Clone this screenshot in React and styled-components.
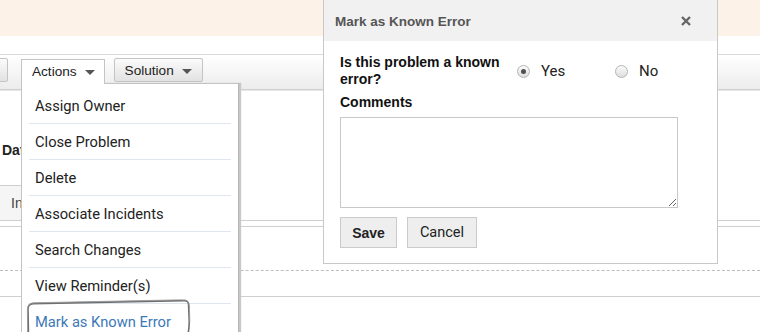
import React from "react";
import styled, { createGlobalStyle } from "styled-components";

const menuItems = [
  "Assign Owner",
  "Close Problem",
  "Delete",
  "Associate Incidents",
  "Search Changes",
  "View Reminder(s)",
  "Mark as Known Error",
];

const App = () => {
  return (
    <Page>
      <GlobalStyle />
      <Banner />
      <Toolbar>
        <ToolButton $stub />
        <ActionsWrap>
          <ActionsTab>
            Actions <Caret />
          </ActionsTab>
          <Menu>
            {menuItems.map((item, i) => (
              <MenuItem key={item} $link={i === menuItems.length - 1}>
                {item}
              </MenuItem>
            ))}
          </Menu>
        </ActionsWrap>
        <ToolButton>
          Solution <Caret />
        </ToolButton>
      </Toolbar>

      <FieldRow>
        <FieldLabel>Date Identified</FieldLabel>
      </FieldRow>
      <TabStrip>
        <Tab>Incidents</Tab>
      </TabStrip>
      <Panel>
        <PanelRow $dashed />
        <PanelRow $short />
      </Panel>

      <Scribble viewBox="0 0 170 40" width="170" height="40">
        <path
          d="M4.5 40 L4 13 Q4 8 9 7.6 L160 4.6 Q164.5 4.4 164.6 9 L165.2 24 Q165.4 33 163.5 40"
          fill="none"
          stroke="#6f6f6f"
          strokeWidth="1.6"
          strokeLinecap="round"
        />
        <path
          d="M3.6 38 L3.4 14 Q3.6 7 10 6.8 L158 3.8 Q165 3.6 165.4 10 L165.8 26"
          fill="none"
          stroke="#9a9a9a"
          strokeWidth="0.9"
          strokeLinecap="round"
        />
      </Scribble>

      <Dialog>
        <DialogHeader>
          <DialogTitle>Mark as Known Error</DialogTitle>
          <CloseIcon viewBox="0 0 10 10" width="10" height="10">
            <path d="M1 1 L9 9 M9 1 L1 9" stroke="#666" strokeWidth="2.4" />
          </CloseIcon>
        </DialogHeader>
        <DialogBody>
          <QuestionRow>
            <Question>Is this problem a known error?</Question>
            <RadioOption>
              <Radio $checked />
              Yes
            </RadioOption>
            <RadioOption>
              <Radio />
              No
            </RadioOption>
          </QuestionRow>
          <FieldTitle>Comments</FieldTitle>
          <Comments />
          <Buttons>
            <DialogButton $primary>Save</DialogButton>
            <DialogButton>Cancel</DialogButton>
          </Buttons>
        </DialogBody>
      </Dialog>
    </Page>
  );
};

export default App;

const GlobalStyle = createGlobalStyle`
  html, body {
    margin: 0;
    padding: 0;
    background: #fff;
    overflow: hidden;
  }
  body {
    font-family: "Liberation Sans", Arial, sans-serif;
    color: #222;
  }
`;

const Page = styled.div`
  position: relative;
  width: 760px;
  height: 332px;
  overflow: hidden;
  background: #fff;
`;

const Banner = styled.div`
  height: 36px;
  background: #fdf2e7;
`;

const Toolbar = styled.div`
  position: relative;
  z-index: 2;
  box-sizing: border-box;
  display: flex;
  align-items: flex-start;
  gap: 9px;
  height: 36px;
  margin-top: 18px;
  padding-top: 3px;
  border-top: 1px solid #dadada;
  border-bottom: 1px solid #cfcfcf;
  box-shadow: 0 1px 0 #e8e8e8;
  background: linear-gradient(#ffffff, #ececec);
`;

const ToolButton = styled.div`
  box-sizing: border-box;
  display: flex;
  align-items: center;
  height: 24px;
  padding: 0 10px 0 10px;
  border: 1px solid #c4c4c4;
  border-radius: 2px;
  background: linear-gradient(#fbfbfb, #e2e2e2);
  font-size: 13.6px;
  color: #222;
  white-space: nowrap;
  ${(p) =>
    p.$stub &&
    `
    width: 70px;
    margin-left: -62px;
    margin-right: 4px;
  `}
`;

const Caret = styled.span`
  width: 0;
  height: 0;
  margin-left: 8px;
  margin-top: 2px;
  border-left: 5px solid transparent;
  border-right: 5px solid transparent;
  border-top: 5px solid #555;
`;

const ActionsWrap = styled.div`
  position: relative;
  margin-top: 1px;
`;

const ActionsTab = styled.div`
  position: relative;
  z-index: 4;
  box-sizing: border-box;
  display: flex;
  align-items: center;
  height: 25px;
  padding: 0 9px 1px 10px;
  border: 1px solid #c4c4c4;
  border-bottom: none;
  background: #fff;
  font-size: 13.6px;
  color: #222;
`;

const Menu = styled.div`
  position: absolute;
  z-index: 3;
  left: 0;
  top: 24px;
  box-sizing: border-box;
  width: 218px;
  padding: 4px 7px 0 7px;
  border: 1px solid #c4c4c4;
  border-right: 1px solid #b4b4b4;
  background: #fff;
  box-shadow: 2px 0 1px #c8c8c8;
`;

const MenuItem = styled.div`
  box-sizing: border-box;
  display: flex;
  align-items: center;
  height: 36px;
  padding-left: 6px;
  border-bottom: 1px solid #dde7f1;
  font-family: Roboto, "Liberation Sans", sans-serif;
  font-size: 14.7px;
  color: ${(p) => (p.$link ? "#3b78b7" : "#222")};
`;

const FieldRow = styled.div`
  box-sizing: border-box;
  height: 95px;
  padding: 52px 0 0 2px;
`;

const FieldLabel = styled.div`
  font-size: 14px;
  font-weight: bold;
  line-height: 17px;
  color: #222;
`;

const TabStrip = styled.div`
  display: flex;
  height: 35px;
  border-bottom: 1px solid #cfcfcf;
`;

const Tab = styled.div`
  display: flex;
  align-items: center;
  padding: 0 14px 0 11px;
  border: 1px solid #cfcfcf;
  border-left: none;
  border-bottom: none;
  background: #f5f5f5;
  font-size: 14px;
  color: #444;
`;

const Panel = styled.div`
  margin-top: 5px;
  border-top: 1px solid #cfcfcf;
`;

const PanelRow = styled.div`
  height: ${(p) => (p.$short ? "25px" : "43px")};
  border-bottom: 1px ${(p) => (p.$dashed ? "dashed #bdbdbd" : "solid #cfcfcf")};
`;

const Scribble = styled.svg`
  position: absolute;
  z-index: 5;
  left: 24px;
  top: 296px;
`;

const Dialog = styled.div`
  position: absolute;
  z-index: 10;
  left: 323px;
  top: -1px;
  box-sizing: border-box;
  width: 395px;
  border: 1px solid #c8c8c8;
  background: #fff;
`;

const DialogHeader = styled.div`
  display: flex;
  align-items: center;
  justify-content: space-between;
  height: 41px;
  padding: 0 26px 0 11px;
  background: #f1f1f1;
`;

const DialogTitle = styled.div`
  font-size: 13.5px;
  font-weight: bold;
  color: #555;
  padding-top: 2px;
`;

const CloseIcon = styled.svg`
  display: block;
  margin-top: 1px;
`;

const DialogBody = styled.div`
  padding: 13px 16px 15px 16px;
`;

const QuestionRow = styled.div`
  display: flex;
  align-items: center;
`;

const Question = styled.div`
  flex-shrink: 0;
  width: 177px;
  font-size: 14px;
  font-weight: bold;
  line-height: 17px;
  color: #111;
`;

const RadioOption = styled.label`
  flex-shrink: 0;
  display: flex;
  align-items: center;
  width: 98px;
  font-family: Roboto, "Liberation Sans", sans-serif;
  font-size: 15px;
  color: #222;
`;

const Radio = styled.span`
  position: relative;
  flex-shrink: 0;
  box-sizing: border-box;
  width: 13px;
  height: 13px;
  margin-right: 11px;
  border: 1px solid #b4b4b4;
  border-radius: 50%;
  background: linear-gradient(#fbfbfb, #dedede);

  &::after {
    content: "";
    display: ${(p) => (p.$checked ? "block" : "none")};
    position: absolute;
    left: 3px;
    top: 3px;
    width: 5px;
    height: 5px;
    border-radius: 50%;
    background: #505050;
  }
`;

const FieldTitle = styled.div`
  margin-top: 6px;
  font-size: 14px;
  font-weight: bold;
  line-height: 17px;
  color: #111;
`;

const Comments = styled.textarea`
  display: block;
  box-sizing: border-box;
  width: 338px;
  height: 91px;
  margin-top: 6px;
  border: 1px solid #c8c8c8;
  border-radius: 0;
  outline: none;
  font-family: "Liberation Sans", Arial, sans-serif;
`;

const Buttons = styled.div`
  display: flex;
  gap: 10px;
  margin-top: 9px;
`;

const DialogButton = styled.button`
  box-sizing: border-box;
  height: 31px;
  padding: 0;
  border: 1px solid #cacaca;
  border-radius: 0;
  background: #eeeeee;
  font-family: ${(p) => (p.$primary ? `"Liberation Sans", Arial` : "Roboto, 'Liberation Sans'")}, sans-serif;
  font-size: ${(p) => (p.$primary ? "14px" : "14.5px")};
  font-weight: ${(p) => (p.$primary ? "bold" : "normal")};
  color: #222;
  width: ${(p) => (p.$primary ? "57px" : "70px")};
`;
